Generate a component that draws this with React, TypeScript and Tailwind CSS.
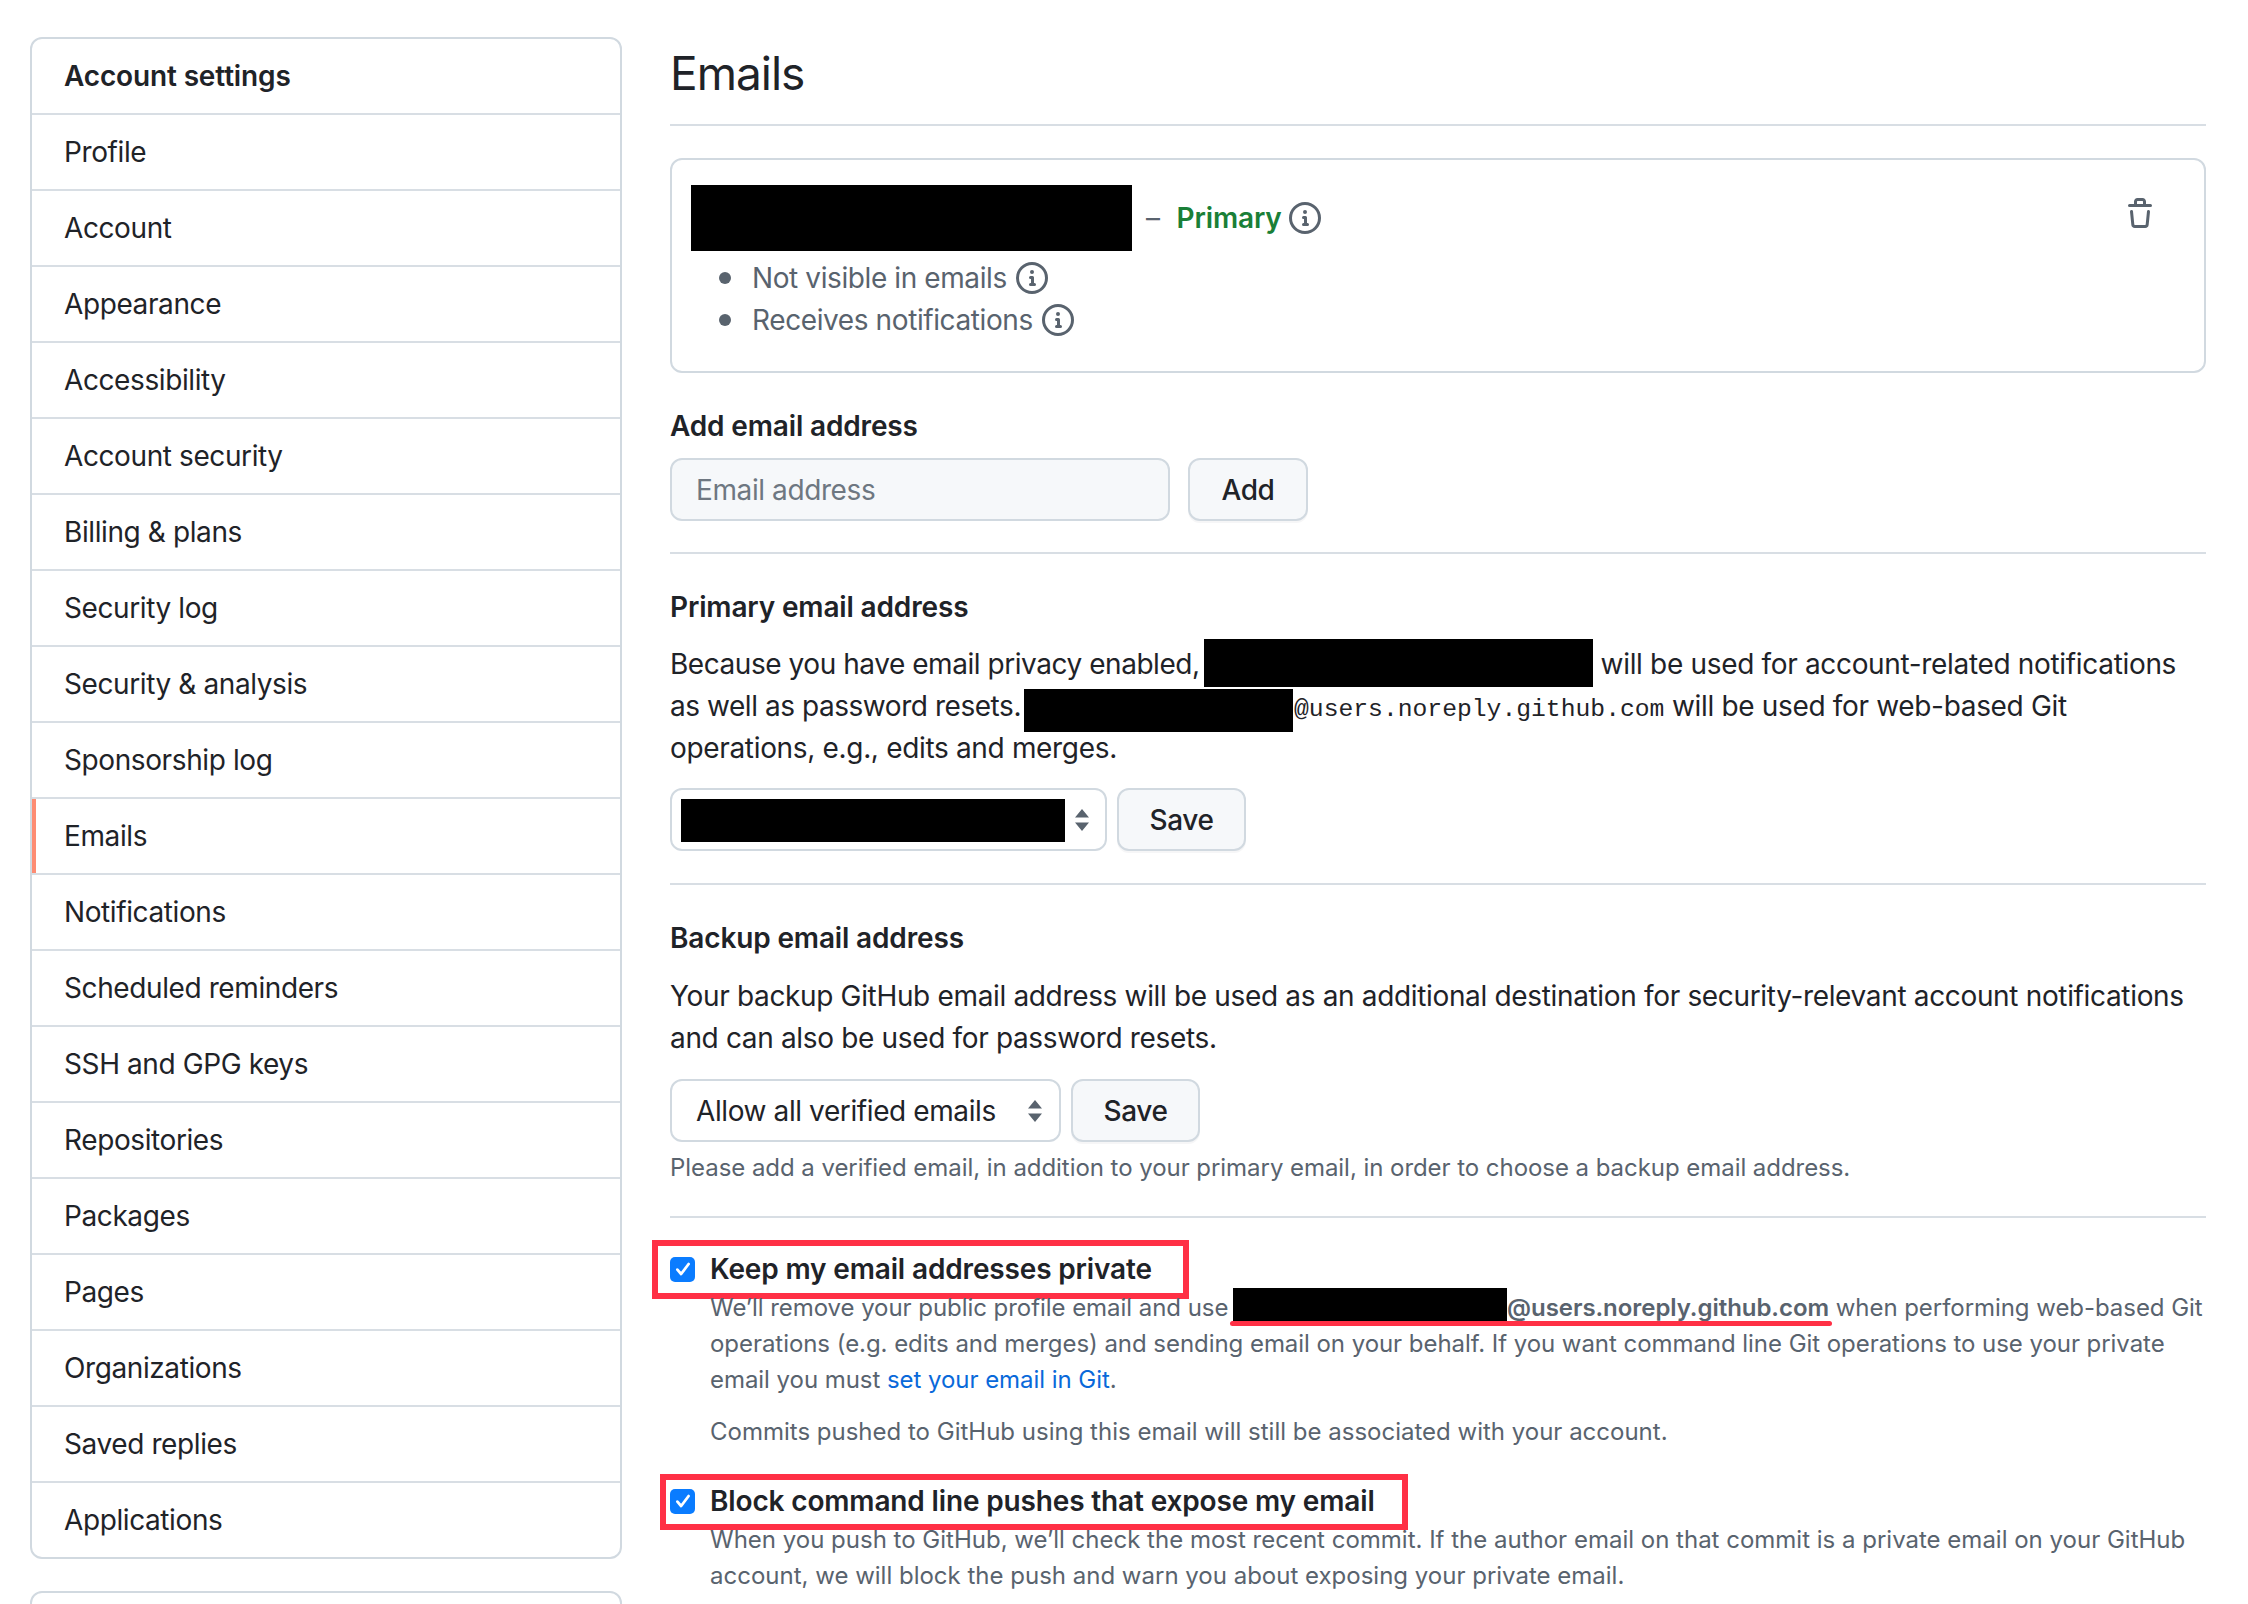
const items = ["Profile","Account","Appearance","Accessibility","Account security","Billing & plans","Security log","Security & analysis","Sponsorship log","Emails","Notifications","Scheduled reminders","SSH and GPG keys","Repositories","Packages","Pages","Organizations","Saved replies","Applications"];

function Info({ className = "" }: { className?: string }) {
  return (
    <svg viewBox="0 0 16 16" fill="currentColor" className={"w-8 h-8 text-[#59636e] shrink-0 " + className}>
      <path d="M0 8a8 8 0 1 1 16 0A8 8 0 0 1 0 8Zm8-6.5a6.5 6.5 0 1 0 0 13 6.5 6.5 0 0 0 0-13ZM6.5 7.75A.75.75 0 0 1 7.25 7h1a.75.75 0 0 1 .75.75v2.75h.25a.75.75 0 0 1 0 1.5h-2a.75.75 0 0 1 0-1.5h.25v-2h-.25a.75.75 0 0 1-.75-.75ZM8 6a1 1 0 1 1 0-2 1 1 0 0 1 0 2Z" />
    </svg>
  );
}

function Trash() {
  return (
    <svg viewBox="0 0 16 16" fill="currentColor" className="w-8 h-8 text-[#59636e]">
      <path d="M11 1.75V3h2.25a.75.75 0 0 1 0 1.5H2.75a.75.75 0 0 1 0-1.5H5V1.75C5 .784 5.784 0 6.75 0h2.5C10.216 0 11 .784 11 1.75ZM4.496 6.675l.66 6.6a.25.25 0 0 0 .249.225h5.19a.25.25 0 0 0 .249-.225l.66-6.6a.75.75 0 0 1 1.492.149l-.66 6.6A1.748 1.748 0 0 1 10.595 15h-5.19a1.75 1.75 0 0 1-1.741-1.575l-.66-6.6a.75.75 0 1 1 1.492-.15ZM6.5 1.75V3h3V1.75a.25.25 0 0 0-.25-.25h-2.5a.25.25 0 0 0-.25.25Z" />
    </svg>
  );
}

function Updown() {
  return (
    <svg viewBox="0 0 16 22" className="w-4 h-[22px] text-[#59636e] shrink-0" fill="currentColor">
      <path d="M8 0l7 8.5H1zM8 22l-7-8.5h14z" />
    </svg>
  );
}

function Btn({ children, w }: { children: string; w: string }) {
  return (
    <button className={"h-[63px] rounded-xl border-2 border-[#d1d9e0] bg-[#f6f8fa] text-[28px] font-medium text-[#1f2328] shadow-[0_2px_0_rgba(31,35,40,0.04)] " + w}>
      {children}
    </button>
  );
}

function Check() {
  return (
    <span className="flex w-[25px] h-[25px] rounded-[5px] bg-[#0a7cff] items-center justify-center shrink-0">
      <svg viewBox="0 0 16 16" className="w-[20px] h-[20px]" fill="none" stroke="white" strokeWidth="2.2" strokeLinecap="round" strokeLinejoin="round">
        <path d="M3.5 8.5l3 3.5 6-8" />
      </svg>
    </span>
  );
}

export default function App() {
  return (
    <div className="w-[2248px] h-[1604px] overflow-hidden bg-white flex items-start pl-[30px] pt-[37px] text-[#1f2328] text-[28px] tracking-[-0.4px] font-['Inter',sans-serif]">
      <aside className="w-[592px] shrink-0">
        <nav className="rounded-xl border-2 border-[#d1d9e0] overflow-hidden">
          <div className="h-[74px] flex items-center px-[32px] font-semibold tracking-[-0.15px]">Account settings</div>
          {items.map((label) => (
            <div key={label} className="relative h-[76px] border-t-2 border-[#d8dee4] flex items-center px-[32px]">
              {label === "Emails" && <span className="absolute left-0 top-0 bottom-0 w-[4px] bg-[#fd8c73]" />}
              {label}
            </div>
          ))}
        </nav>
        <div className="mt-[32px] h-[60px] rounded-xl border-2 border-[#d1d9e0]" />
      </aside>

      <main className="ml-[48px] w-[1536px] shrink-0">
        <h1 className="text-[46px] tracking-[-1px] leading-[74px] font-normal h-[90px] -mt-[1px] border-b-2 border-[#d8dee4]">Emails</h1>

        <section className="mt-[32px] h-[215px] rounded-xl border-2 border-[#d1d9e0] relative pl-[19px] pt-[25px]">
          <div className="flex items-center h-[66px]">
            <span className="w-[441px] h-[66px] bg-black" />
            <span className="ml-[14px] text-[#59636e]">–</span>
            <span className="ml-[17px] font-semibold text-[#1a7f37] tracking-[-0.15px]">Primary</span>
            <Info className="ml-[7px]" />
          </div>
          <ul className="text-[#59636e]">
            <li className="flex items-center h-[42px] mt-[6px]">
              <span className="w-[12px] h-[12px] rounded-full bg-[#59636e] ml-[28px] mr-[21px]" />
              Not visible in emails<Info className="ml-[9px]" />
            </li>
            <li className="flex items-center h-[42px]">
              <span className="w-[12px] h-[12px] rounded-full bg-[#59636e] ml-[28px] mr-[21px]" />
              Receives notifications<Info className="ml-[9px]" />
            </li>
          </ul>
          <span className="absolute right-[48px] top-[38px]"><Trash /></span>
        </section>

        <h2 className="mt-[36px] font-semibold tracking-[-0.15px] leading-[34px]">Add email address</h2>
        <div className="mt-[15px] flex gap-[18px]">
          <div className="w-[500px] h-[63px] rounded-xl border-2 border-[#d1d9e0] bg-[#f6f8fa] flex items-center px-[24px] pt-[1px] text-[#6e7781]">Email address</div>
          <Btn w="w-[120px]">Add</Btn>
        </div>
        <div className="mt-[31px] border-t-2 border-[#d8dee4]" />

        <h2 className="mt-[36px] font-semibold tracking-[-0.15px] leading-[34px]">Primary email address</h2>
        <p className="mt-[19px] leading-[42px] whitespace-nowrap tracking-[-0.33px]">
          <span className="tracking-[-0.45px]">Because you have email privacy enabled, </span><span className="inline-block relative w-[389px] h-0 -ml-[3px]"><span className="absolute left-0 right-0 -bottom-[13px] h-[48px] bg-black" /></span> will be used for account-related notifications
          <br />
          <span className="tracking-[-0.45px]">as well as password resets.</span><span className="inline-block relative w-[269px] h-0 ml-[3px]"><span className="absolute left-0 right-0 -bottom-[16px] h-[43px] bg-black" /></span><span className="font-['Liberation_Mono',monospace] text-[24.7px] leading-none tracking-normal ml-[1px]">@users.noreply.github.com</span> will be used for web-based Git
          <br />
          operations, e.g., edits and merges.
        </p>
        <div className="mt-[19px] flex gap-[10px]">
          <div className="w-[437px] h-[63px] rounded-xl border-2 border-[#d1d9e0] flex items-center pl-[9px] pt-[1px]">
            <span className="w-[384px] h-[43px] bg-black" />
            <span className="ml-[9px]"><Updown /></span>
          </div>
          <Btn w="w-[129px]">Save</Btn>
        </div>
        <div className="mt-[32px] border-t-2 border-[#d8dee4]" />

        <h2 className="mt-[36px] font-semibold tracking-[-0.15px] leading-[34px]">Backup email address</h2>
        <p className="mt-[20px] leading-[42px] whitespace-nowrap tracking-[-0.34px]">
          Your backup GitHub email address will be used as an additional destination for security-relevant account notifications
          <br />
          and can also be used for password resets.
        </p>
        <div className="mt-[20px] flex gap-[10px]">
          <div className="w-[391px] h-[63px] rounded-xl border-2 border-[#d1d9e0] flex items-center pl-[24px] pr-[16px] justify-between">
            Allow all verified emails
            <Updown />
          </div>
          <Btn w="w-[129px]">Save</Btn>
        </div>
        <p className="mt-[8px] text-[24px] tracking-[-0.05px] leading-[36px] text-[#59636e]">Please add a verified email, in addition to your primary email, in order to choose a backup email address.</p>
        <div className="mt-[30px] border-t-2 border-[#d8dee4]" />

        <div className="relative mt-[33px] flex items-center gap-[15px] h-[36px]">
          <Check />
          <span className="font-semibold tracking-[-0.15px]">Keep my email addresses private</span>
          <span className="absolute left-[-18px] top-[-11px] w-[537px] h-[59px] border-[6px] border-[#ff3045]" />
        </div>
        <div className="mt-[3px] pl-[40px] text-[24px] tracking-[-0.05px] leading-[36px] text-[#59636e]">
          <p className="relative whitespace-nowrap">
            We’ll remove your public profile email and use <span className="inline-block relative w-[274px] h-0 -ml-[2px]"><span className="absolute left-0 right-0 -bottom-[5px] h-[33px] bg-black" /></span><span className="font-semibold">@users.noreply.github.com</span> when performing web-based Git
            <br />
            operations (e.g. edits and merges) and sending email on your behalf. If you want command line Git operations to use your private
            <br />
            email you must <span className="text-[#0969da]">set your email in Git</span>.
            <span className="absolute left-[520px] top-[31px] w-[602px] h-[5px] rounded-full bg-[#ff3045]" />
          </p>
          <p className="mt-[16px] tracking-normal">Commits pushed to GitHub using this email will still be associated with your account.</p>
        </div>

        <div className="relative mt-[33px] flex items-center gap-[15px] h-[36px]">
          <Check />
          <span className="font-semibold tracking-[-0.15px]">Block command line pushes that expose my email</span>
          <span className="absolute left-[-10px] top-[-9px] w-[748px] h-[56px] border-[6px] border-[#ff3045]" />
        </div>
        <div className="mt-[3px] pl-[40px] text-[24px] tracking-normal leading-[36px] text-[#59636e] whitespace-nowrap">
          <p>
            When you push to GitHub, we’ll check the most recent commit. If the author email on that commit is a private email on your GitHub
            <br />
            account, we will block the push and warn you about exposing your private email.
          </p>
        </div>
      </main>
    </div>
  );
}
